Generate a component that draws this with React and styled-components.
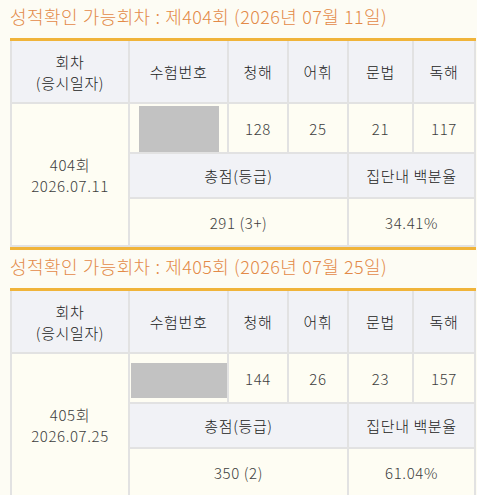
import React from 'react'
import styled, { createGlobalStyle } from 'styled-components'

const GlobalStyle = createGlobalStyle`
  html, body {
    margin: 0;
    padding: 0;
    background: #fdfcf4;
  }
  body {
    font-family: 'Noto Sans CJK KR', 'Noto Sans', sans-serif;
    color: #333;
  }
`

const Page = styled.div`
  padding: 0 1px 0 10px;
`

const Section = styled.section`
  display: flex;
  flex-direction: column;
`

const Title = styled.h2`
  margin: 0;
  height: 38px;
  padding-top: 3px;
  box-sizing: border-box;
  font-size: 18px;
  font-weight: 300;
  line-height: 26px;
  color: #e38a48;
  letter-spacing: 0.4px;
  word-spacing: 0.5px;
`

const Grid = styled.div`
  display: grid;
  grid-template-columns: 116px 97px 58px 58px 63px 60px;
  grid-template-rows: 61px 48px 43px 46px;
  gap: 2px;
  padding: 0 2px 2px 2px;
  background: #e2e2e2;
  border-top: 3px solid #f0b43a;
  border-bottom: 3px solid #f0b43a;
  width: max-content;
`

const Cell = styled.div`
  display: flex;
  align-items: center;
  justify-content: center;
  text-align: center;
  font-size: 15px;
  font-weight: 300;
  line-height: 21px;
  letter-spacing: 0.6px;
  background: ${(p) => (p.$head ? '#f1f2f6' : '#fefdf3')};
  color: ${(p) => (p.$head ? '#222' : '#3d3d3d')};
  grid-column: ${(p) => p.$col || 'auto'};
  grid-row: ${(p) => p.$row || 'auto'};
`

const PhotoCell = styled(Cell)`
  align-items: flex-end;
`

const Redacted = styled.div`
  width: ${(p) => p.$w}px;
  height: ${(p) => p.$h}px;
  margin-bottom: ${(p) => p.$mb}px;
  background: #c2c2c2;
`

const exams = [
  {
    no: 404,
    title: '제404회 (2026년 07월 11일)',
    date: '2026.07.11',
    scores: [128, 25, 21, 117],
    total: '291 (3+)',
    pct: '34.41%',
    box: { w: 80, h: 46, mb: 0 },
  },
  {
    no: 405,
    title: '제405회 (2026년 07월 25일)',
    date: '2026.07.25',
    scores: [144, 26, 23, 157],
    total: '350 (2)',
    pct: '61.04%',
    box: { w: 96, h: 35, mb: 4 },
  },
]

const heads = ['청해', '어휘', '문법', '독해']

function ExamTable({ exam }) {
  return (
    <Section>
      <Title>성적확인 가능회차 : {exam.title}</Title>
      <Grid>
        <Cell $head>
          회차
          <br />
          (응시일자)
        </Cell>
        <Cell $head>수험번호</Cell>
        {heads.map((h) => (
          <Cell $head key={h}>
            {h}
          </Cell>
        ))}

        <Cell $row="2 / 5" $col="1">
          {exam.no}회
          <br />
          {exam.date}
        </Cell>
        <PhotoCell>
          <Redacted $w={exam.box.w} $h={exam.box.h} $mb={exam.box.mb} />
        </PhotoCell>
        {exam.scores.map((s, i) => (
          <Cell key={i}>{s}</Cell>
        ))}

        <Cell $head $col="2 / 5">
          총점(등급)
        </Cell>
        <Cell $head $col="5 / 7">
          집단내 백분율
        </Cell>

        <Cell $col="2 / 5">{exam.total}</Cell>
        <Cell $col="5 / 7">{exam.pct}</Cell>
      </Grid>
    </Section>
  )
}

export default function App() {
  return (
    <Page>
      <GlobalStyle />
      {exams.map((e) => (
        <ExamTable key={e.no} exam={e} />
      ))}
    </Page>
  )
}
